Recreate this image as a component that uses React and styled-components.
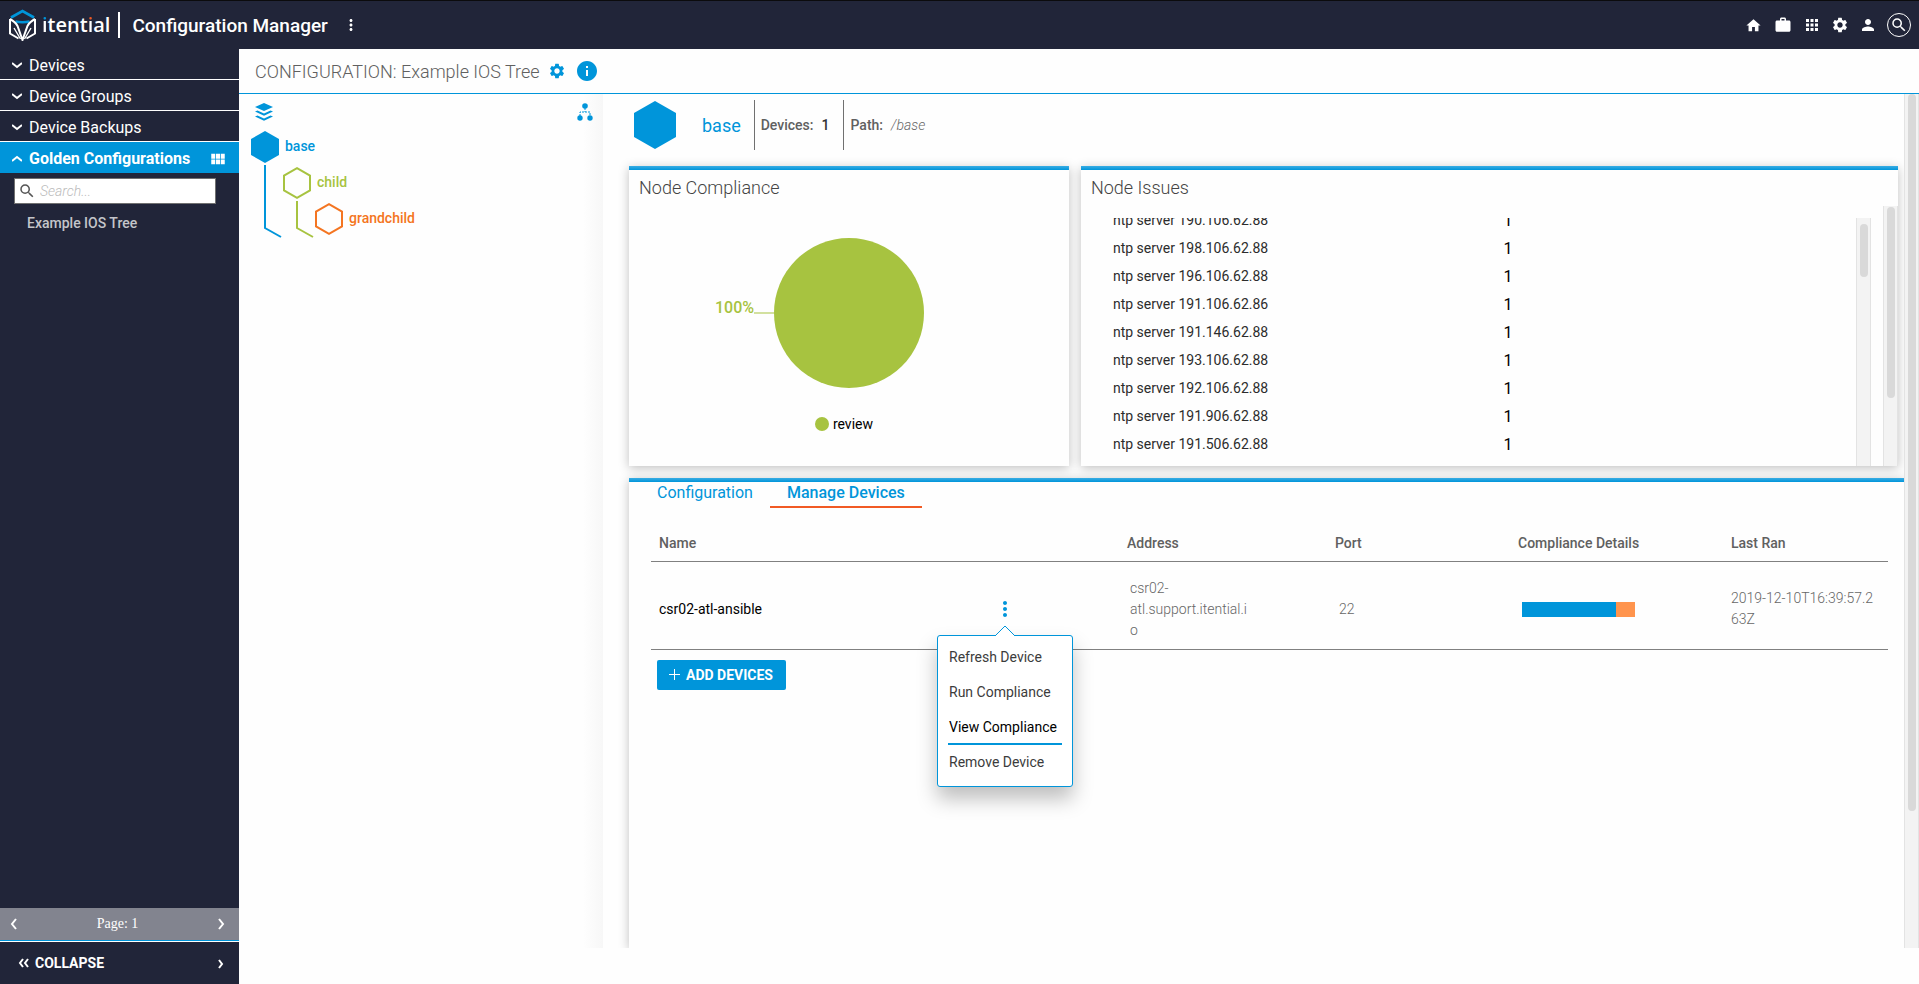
import React, { useLayoutEffect, useRef, useState } from "react";
import styled, { createGlobalStyle } from "styled-components";
import {
  MdHome,
  MdWork,
  MdApps,
  MdSettings,
  MdPerson,
  MdSearch,
  MdMoreVert,
  MdViewModule,
  MdInfo,
} from "react-icons/md";

const GlobalStyle = createGlobalStyle`
  * {
    box-sizing: border-box;
  }
  body {
    margin: 0;
    background: #fefefe;
    color: #606060;
    font-family: Roboto, "Liberation Sans", sans-serif;
    font-size: 14px;
  }
  button,
  input {
    font-family: inherit;
  }
`;

const blue = "#0095da";
const green = "#a7c340";
const orange = "#f47521";
const navy = "#212539";

const Shell = styled.div`
  display: flex;
  flex-direction: column;
  height: 100vh;
`;

/* header */
const Header = styled.header`
  display: flex;
  align-items: center;
  height: 49px;
  flex-shrink: 0;
  padding: 0 8px;
  color: #fff;
  background: ${navy};
  border-top: 1px solid #0b0b0d;
`;
const Brand = styled.a`
  display: flex;
  align-items: center;
  gap: 5px;
  padding-right: 8px;
  border-right: 2px solid #fff;
  height: 26px;
  color: #fff;
  text-decoration: none;
`;
const BrandName = styled.span`
  font: 600 20px/26px "Open Sans", sans-serif;
`;
const BrandLetter = styled.span`
  background: linear-gradient(${(props) => props.$dot} 10px, #fff 10px);
  background-clip: text;
  color: transparent;
`;
const AppTitle = styled.h1`
  margin: 0 14px 0 12px;
  font-size: 19px;
  font-weight: 500;
`;
const IconButton = styled.button`
  display: flex;
  align-items: center;
  justify-content: center;
  width: ${(props) => props.$size || 18}px;
  height: ${(props) => props.$size || 18}px;
  padding: 0;
  border: none;
  background: none;
  color: inherit;
  cursor: pointer;
`;
const HeaderTools = styled.nav`
  display: flex;
  align-items: center;
  gap: 10px;
  margin-left: auto;
`;
const SearchCircle = styled(IconButton)`
  border: 1px solid #fff;
  border-radius: 50%;
`;

/* sidebar */
const Body = styled.div`
  display: flex;
  flex: 1;
  min-height: 0;
`;
const Sidebar = styled.aside`
  display: flex;
  flex-direction: column;
  width: 239px;
  flex-shrink: 0;
  color: #fff;
  background: ${navy};
`;
const Section = styled.div`
  display: flex;
  align-items: center;
  height: 31px;
  padding: 2px 12px 0 0;
  background: ${(props) => (props.$open ? blue : "none")};
  border-bottom: ${(props) => (props.$open ? "none" : "1px solid #fff")};
`;
const SectionToggle = styled.button`
  display: flex;
  align-items: center;
  gap: 7px;
  flex: 1;
  padding: 0 0 0 12px;
  border: none;
  background: none;
  color: #fff;
  font-size: 16px;
  font-weight: ${(props) => (props.$open ? 700 : 400)};
  cursor: pointer;
`;
const SearchBox = styled.label`
  display: flex;
  align-items: center;
  gap: 4px;
  height: 26px;
  margin: 5px 23px 0 14px;
  padding: 0 4px 0 3px;
  border: 1px solid #707070;
  background: #fff;
  color: #555;
`;
const SearchInput = styled.input`
  flex: 1;
  min-width: 0;
  padding: 0;
  border: none;
  outline: none;
  font-size: 14px;
  &::placeholder {
    color: #bbb;
    font-style: italic;
    font-weight: 300;
  }
`;
const TreeList = styled.ul`
  flex: 1;
  margin: 0;
  padding: 10px 27px;
  list-style: none;
`;
const TreeLink = styled.a`
  color: #c4c5ca;
  font-weight: 500;
  line-height: 18px;
  text-decoration: none;
`;
const Pager = styled.div`
  display: flex;
  align-items: center;
  justify-content: space-between;
  height: 33px;
  padding: 0 12px 0 8px;
  background: #82848f;
  border-bottom: 1px solid ${blue};
  font-family: "Liberation Serif", serif;
`;
const CollapseBar = styled.div`
  display: flex;
  align-items: center;
  justify-content: space-between;
  height: 43px;
  padding: 0 12px 0 18px;
  border-top: 1px solid #fff;
`;
const CollapseButton = styled.button`
  display: flex;
  align-items: center;
  gap: 5px;
  padding: 0;
  border: none;
  background: none;
  color: #fff;
  font-size: 14px;
  font-weight: 700;
  cursor: pointer;
`;

/* main area */
const Main = styled.main`
  display: flex;
  flex-direction: column;
  flex: 1;
  min-width: 0;
  padding-bottom: 36px;
`;
const TitleBar = styled.div`
  display: flex;
  align-items: center;
  height: 45px;
  flex-shrink: 0;
  padding-left: 16px;
  color: ${blue};
  border-bottom: 1px solid ${blue};
`;
const PageTitle = styled.h2`
  margin: 0 8px 0 0;
  color: #606060;
  font-size: 18px;
  font-weight: 300;
`;
const InfoButton = styled(IconButton)`
  margin-left: 9px;
`;
const Panes = styled.div`
  display: flex;
  flex: 1;
  min-height: 0;
`;
const TreePane = styled.section`
  width: 364px;
  flex-shrink: 0;
  padding: 9px 9px 0 12px;
  background: linear-gradient(to left, #f7f7f7, rgba(255, 255, 255, 0) 20px);
`;
const TreeTools = styled.div`
  display: flex;
  justify-content: space-between;
  padding: 0 0 8px 4px;
  color: ${blue};
`;
const Node = styled.div`
  position: relative;
  display: flex;
  align-items: center;
  gap: 6px;
  height: 36px;
  padding-left: ${(props) => props.$depth * 32}px;
  color: ${(props) => props.$color};
  font-weight: 500;
`;
const NodeLabel = styled.span`
  padding-bottom: 2px;
`;
const Connector = styled.svg`
  position: absolute;
  top: 36px;
  left: ${(props) => props.$depth * 32 + 13}px;
`;
const DetailPane = styled.section`
  display: flex;
  flex-direction: column;
  flex: 1;
  min-width: 0;
  padding-left: 26px;
  overflow: hidden;
`;
const NodeHeader = styled.div`
  display: flex;
  align-items: center;
  height: 72px;
  flex-shrink: 0;
  padding: 6px 5px 16px;
  color: ${blue};
`;
const NodeName = styled.h3`
  margin: 0 13px 0 26px;
  font-size: 18px;
  font-weight: 400;
`;
const Fact = styled.div`
  display: flex;
  align-items: center;
  gap: 8px;
  height: 50px;
  padding: 0 14px 0 6px;
  border-left: 1px solid #707070;
  color: #606060;
  font-weight: 500;
`;
const FactValue = styled.span`
  color: #333;
`;
const PathValue = styled.em`
  color: #666;
  font-weight: 300;
`;
const Cards = styled.div`
  display: grid;
  grid-template-columns: 35fr 65fr;
  gap: 12px;
  margin-right: 6px;
`;
const Card = styled.section`
  display: flex;
  flex-direction: column;
  height: 300px;
  padding-top: 4px;
  background: linear-gradient(#3aace3, ${blue}) top / 100% 4px no-repeat #fefefe;
  box-shadow: 0 2px 10px rgba(0, 0, 0, 0.25);
`;
const CardTitle = styled.h3`
  margin: 0;
  padding: 6px 10px;
  color: #444;
  font-size: 18px;
  font-weight: 300;
  line-height: 24px;
`;
const PieChart = styled.svg`
  display: block;
  margin: 31px auto 0;
`;
const Legend = styled.div`
  display: flex;
  align-items: center;
  justify-content: center;
  gap: 4px;
  margin-top: 27px;
  padding-right: 10px;
  color: #000;
`;
const LegendDot = styled.span`
  width: 14px;
  height: 14px;
  border-radius: 50%;
  background: ${green};
`;
const IssuesArea = styled.div`
  display: flex;
  flex: 1;
  min-height: 0;
`;
const IssuesScroller = styled.div`
  flex: 1;
  margin: 12px 0 0 32px;
  overflow: hidden;
`;
const IssuesTable = styled.table`
  width: 100%;
  border-collapse: collapse;
  table-layout: fixed;
  td {
    height: 28px;
    padding: 0;
    color: #2c2c2c;
  }
  td + td {
    padding-left: 19px;
    color: #000;
    font-size: 16px;
  }
`;
const Track = styled.div`
  width: 15px;
  flex-shrink: 0;
  margin: ${(props) => props.$margin || 0};
  padding: ${(props) => props.$top || 0}px 3px 0;
  background: #f3f3f3;
  border: solid #e3e3e3;
  border-width: 0 1px;
`;
const Thumb = styled.div`
  width: 8px;
  height: ${(props) => props.$length};
  border-radius: 4px;
  background: #d9d9d9;
`;
const Panel = styled(Card)`
  flex: 1;
  height: auto;
  margin-top: 12px;
`;
const Tabs = styled.div`
  display: flex;
  margin-left: 11px;
`;
const Tab = styled.button`
  padding: 1px 17px 3px;
  border: none;
  border-bottom: 2px solid ${(props) => (props.$active ? "#f15a24" : "transparent")};
  background: none;
  color: ${blue};
  font-size: 16px;
  font-weight: ${(props) => (props.$active ? 500 : 400)};
  line-height: 20px;
  cursor: pointer;
`;
const DevicesArea = styled.div`
  margin: 17px 16px 10px 22px;
`;
const DevicesTable = styled.table`
  width: 100%;
  border-collapse: collapse;
  table-layout: fixed;
  color: #666;
  font-weight: 300;
  line-height: 21px;
  tr {
    border-bottom: 1px solid #808080;
  }
  th {
    height: 36px;
    padding: 2px 8px 0;
    color: #606060;
    font-weight: 500;
    text-align: left;
  }
  td {
    height: 88px;
    padding: 8px 8px 0;
  }
`;
const Col = styled.col`
  width: ${(props) => props.$width};
`;
const DeviceName = styled.td`
  color: #000;
  font-weight: 400;
`;
const Address = styled.div`
  width: 122px;
  margin-left: 3px;
  overflow-wrap: anywhere;
`;
const Port = styled.td`
  && {
    padding-left: 12px;
  }
`;
const Timestamp = styled.td`
  word-break: break-all;
`;
const ComplianceBar = styled.div`
  width: 113px;
  height: 15px;
  margin-left: 4px;
  background: #ff944d;
`;
const CompliancePassed = styled.div`
  height: 100%;
  background: ${blue};
`;
const MenuAnchor = styled.div`
  position: relative;
  width: 24px;
  margin: 0 auto;
  color: ${blue};
`;
const Menu = styled.div`
  position: absolute;
  top: 38px;
  left: -56px;
  z-index: 2;
  width: 136px;
  padding: 4px 10px 6px;
  background: #fff;
  border: 1px solid ${blue};
  border-radius: 3px;
  box-shadow: 0 12px 20px rgba(0, 0, 0, 0.25);
`;
const MenuArrow = styled.svg`
  position: absolute;
  top: -11px;
  left: 57px;
`;
const MenuItem = styled.button`
  display: block;
  width: 100%;
  height: 35px;
  padding: 0 0 0 1px;
  border: none;
  border-bottom: 2px solid ${(props) => (props.$active ? blue : "transparent")};
  background: none;
  color: ${(props) => (props.$active ? "#000" : "#3c3c3c")};
  font-size: 14px;
  text-align: left;
  white-space: nowrap;
  cursor: pointer;
`;
const AddButton = styled.button`
  display: flex;
  align-items: center;
  align-self: flex-start;
  gap: 6px;
  height: 30px;
  margin-left: 28px;
  padding: 0 13px 0 12px;
  border: none;
  border-radius: 2px;
  background: ${blue};
  color: #fff;
  font-size: 14px;
  font-weight: 700;
  cursor: pointer;
`;

const Chevron = ({ points, width = 12, height = 12 }) => (
  <svg width={width} height={height} fill="none" stroke="currentColor" strokeWidth="2">
    <path d={points} />
  </svg>
);

const Logo = () => (
  <svg width="29" height="32" viewBox="0 0 29 32" fill="none">
    <path d="M3 8.5 L14.5 2 L26 8.5" stroke={blue} strokeWidth="2.6" />
    <path d="M7.5 12.5 Q14.5 14 21.5 12.5" stroke={blue} strokeWidth="2.4" />
    <path d="M2 10 V24.5 L10.5 29.5" stroke="#fff" strokeWidth="2" />
    <path d="M27 10 V24.5 L18.5 29.5" stroke="#fff" strokeWidth="2" />
    <path d="M2 10 Q7.5 13 9.5 17 L14.5 31 L19.5 17 Q21.5 13 27 10" stroke="#fff" strokeWidth="2" />
    <path d="M6 19 L12.5 30 M23 19 L16.5 30" stroke="#fff" strokeWidth="1.4" />
  </svg>
);

const Hexagon = ({ width, height, filled }) => (
  <svg width={width} height={height} viewBox="0 0 28 32">
    <path
      d={filled ? "M14 0 L28 8 V24 L14 32 L0 24 V8 Z" : "M14 1.2 L27 8.6 V23.4 L14 30.8 L1 23.4 V8.6 Z"}
      fill={filled ? "currentColor" : "none"}
      stroke={filled ? "none" : "currentColor"}
      strokeWidth="2"
    />
  </svg>
);

const LayersIcon = () => (
  <svg width="18" height="18" viewBox="0 0 18 18" fill="currentColor">
    <path d="M9 0 L18 4 L9 8 L0 4 Z" />
    <path d="M0 8.5 L2.5 7.5 L9 10.5 L15.5 7.5 L18 8.5 L9 12.7 Z" />
    <path d="M0 13.5 L2.5 12.5 L9 15.5 L15.5 12.5 L18 13.5 L9 17.7 Z" />
  </svg>
);

const HierarchyIcon = () => (
  <svg width="16" height="18" viewBox="0 0 16 18" fill="currentColor">
    <circle cx="8" cy="3" r="2.8" />
    <circle cx="3" cy="15" r="2.7" />
    <circle cx="13" cy="15" r="2.7" />
    <path d="M8 5 V9 M3 13 V9 H13 V13" fill="none" stroke="currentColor" strokeWidth="1" strokeDasharray="2 1" />
  </svg>
);

const sections = ["Devices", "Device Groups", "Device Backups"];

const nodes = [
  { name: "base", color: blue, drop: 63 },
  { name: "child", color: green, drop: 27 },
  { name: "grandchild", color: orange },
];

const issues = [
  "190.106.62.88",
  "198.106.62.88",
  "196.106.62.88",
  "191.106.62.86",
  "191.146.62.88",
  "193.106.62.88",
  "192.106.62.88",
  "191.906.62.88",
  "191.506.62.88",
  "191.106.62.11",
  "191.106.62.14",
];

const menuItems = ["Refresh Device", "Run Compliance", "View Compliance", "Remove Device"];

const device = {
  name: "csr02-atl-ansible",
  address: "csr02-atl.support.itential.io",
  port: 22,
  passed: 83,
  lastRan: "2019-12-10T16:39:57.263Z",
};

function TopBar() {
  return (
    <Header>
      <Brand href="#">
        <Logo />
        <BrandName>
          <BrandLetter $dot={blue}>i</BrandLetter>tent
          <BrandLetter $dot="#f15a24">i</BrandLetter>al
        </BrandName>
      </Brand>
      <AppTitle>Configuration Manager</AppTitle>
      <IconButton aria-label="Application menu">
        <MdMoreVert size={18} />
      </IconButton>
      <HeaderTools>
        <IconButton $size={20} aria-label="Home">
          <MdHome size={17} />
        </IconButton>
        <IconButton $size={20} aria-label="Jobs">
          <MdWork size={18} />
        </IconButton>
        <IconButton aria-label="Applications">
          <MdApps size={18} />
        </IconButton>
        <IconButton aria-label="Settings">
          <MdSettings size={18} />
        </IconButton>
        <IconButton aria-label="Profile">
          <MdPerson size={18} />
        </IconButton>
        <SearchCircle $size={24} aria-label="Search">
          <MdSearch size={18} />
        </SearchCircle>
      </HeaderTools>
    </Header>
  );
}

function SideNav() {
  const [search, setSearch] = useState("");

  return (
    <Sidebar>
      {sections.map((name) => (
        <Section key={name}>
          <SectionToggle>
            <Chevron width={10} points="M0 4 L5 8 L10 4" />
            {name}
          </SectionToggle>
        </Section>
      ))}
      <Section $open>
        <SectionToggle $open>
          <Chevron width={10} points="M0 8 L5 4 L10 8" />
          Golden Configurations
        </SectionToggle>
        <IconButton aria-label="Show all">
          <MdViewModule size={18} />
        </IconButton>
      </Section>
      <SearchBox>
        <MdSearch size={18} />
        <SearchInput
          aria-label="Search configurations"
          placeholder="Search..."
          value={search}
          onChange={(e) => setSearch(e.target.value)}
        />
      </SearchBox>
      <TreeList>
        <li>
          <TreeLink href="#">Example IOS Tree</TreeLink>
        </li>
      </TreeList>
      <Pager>
        <IconButton $size={12} aria-label="Previous page">
          <Chevron points="M8 1 L4 6 L8 11" />
        </IconButton>
        Page: 1
        <IconButton $size={12} aria-label="Next page">
          <Chevron points="M4 1 L8 6 L4 11" />
        </IconButton>
      </Pager>
      <CollapseBar>
        <CollapseButton>
          <Chevron points="M5 2 L2 6 L5 10 M10 2 L7 6 L10 10" />
          COLLAPSE
        </CollapseButton>
        <IconButton $size={12} aria-label="Expand">
          <Chevron points="M4 3 L7 7 L4 11" />
        </IconButton>
      </CollapseBar>
    </Sidebar>
  );
}

function ConfigTree() {
  return (
    <TreePane>
      <TreeTools>
        <IconButton aria-label="Layers">
          <LayersIcon />
        </IconButton>
        <IconButton aria-label="Tree view">
          <HierarchyIcon />
        </IconButton>
      </TreeTools>
      {nodes.map((node, depth) => (
        <Node key={node.name} $depth={depth} $color={node.color}>
          <Hexagon width={28} height={32} filled={depth === 0} />
          <NodeLabel>{node.name}</NodeLabel>
          {node.drop && (
            <Connector $depth={depth} width="18" height={node.drop + 10} fill="none" stroke="currentColor" strokeWidth="2">
              <path d={`M1 0 V${node.drop} L17 ${node.drop + 9}`} />
            </Connector>
          )}
        </Node>
      ))}
    </TreePane>
  );
}

function NodeCompliance() {
  return (
    <Card>
      <CardTitle>Node Compliance</CardTitle>
      <PieChart width="268" height="152" role="img" aria-label="100% review">
        <circle cx="134" cy="76" r="75" fill={green} />
        <path d="M39 76 H59" stroke={green} strokeWidth="1" />
        <text x="0" y="76" fill={green} fontSize="16" fontWeight="500">
          100%
        </text>
      </PieChart>
      <Legend>
        <LegendDot />
        review
      </Legend>
    </Card>
  );
}

function NodeIssues() {
  const scrollerRef = useRef(null);

  useLayoutEffect(() => {
    scrollerRef.current.scrollTop = 12;
  }, []);

  return (
    <Card>
      <CardTitle>Node Issues</CardTitle>
      <IssuesArea>
        <IssuesScroller ref={scrollerRef}>
          <IssuesTable>
            <tbody>
              {issues.map((ip) => (
                <tr key={ip}>
                  <td>ntp server {ip}</td>
                  <td>1</td>
                </tr>
              ))}
            </tbody>
          </IssuesTable>
        </IssuesScroller>
        <Track $margin="12px 12px 0 0" $top={6}>
          <Thumb $length="53px" />
        </Track>
        <Track $top={1}>
          <Thumb $length="191px" />
        </Track>
      </IssuesArea>
    </Card>
  );
}

function DeviceMenu() {
  const [open, setOpen] = useState(true);

  return (
    <MenuAnchor>
      <IconButton $size={24} aria-label="Device actions" onClick={() => setOpen(!open)}>
        <MdMoreVert size={24} />
      </IconButton>
      {open && (
        <Menu>
          <MenuArrow width="20" height="12">
            <path d="M0 11 L10 1 L20 11" fill="#fff" stroke={blue} />
            <path d="M1 11 H19" stroke="#fff" strokeWidth="2" />
          </MenuArrow>
          {menuItems.map((item) => (
            <MenuItem key={item} $active={item === "View Compliance"}>
              {item}
            </MenuItem>
          ))}
        </Menu>
      )}
    </MenuAnchor>
  );
}

function ManageDevices() {
  return (
    <Panel>
      <Tabs>
        <Tab>Configuration</Tab>
        <Tab $active>Manage Devices</Tab>
      </Tabs>
      <DevicesArea>
        <DevicesTable>
          <colgroup>
            <Col />
            <Col $width="228px" />
            <Col $width="208px" />
            <Col $width="183px" />
            <Col $width="213px" />
            <Col $width="165px" />
          </colgroup>
          <thead>
            <tr>
              <th>Name</th>
              <th aria-label="Actions" />
              <th>Address</th>
              <th>Port</th>
              <th>Compliance Details</th>
              <th>Last Ran</th>
            </tr>
          </thead>
          <tbody>
            <tr>
              <DeviceName>{device.name}</DeviceName>
              <td>
                <DeviceMenu />
              </td>
              <td>
                <Address>{device.address}</Address>
              </td>
              <Port>{device.port}</Port>
              <td>
                <ComplianceBar>
                  <CompliancePassed style={{ width: `${device.passed}%` }} />
                </ComplianceBar>
              </td>
              <Timestamp>{device.lastRan}</Timestamp>
            </tr>
          </tbody>
        </DevicesTable>
      </DevicesArea>
      <AddButton>
        <svg width="11" height="11" stroke="currentColor" strokeWidth="1">
          <path d="M5.5 0 V11 M0 5.5 H11" />
        </svg>
        ADD DEVICES
      </AddButton>
    </Panel>
  );
}

function App() {
  return (
    <>
      <GlobalStyle />
      <Shell>
        <TopBar />
        <Body>
          <SideNav />
          <Main>
            <TitleBar>
              <PageTitle>CONFIGURATION: Example IOS Tree</PageTitle>
              <IconButton aria-label="Edit configuration">
                <MdSettings size={18} />
              </IconButton>
              <InfoButton $size={24} aria-label="Information">
                <MdInfo size={24} />
              </InfoButton>
            </TitleBar>
            <Panes>
              <ConfigTree />
              <DetailPane>
                <NodeHeader>
                  <Hexagon width={42} height={48} filled />
                  <NodeName>base</NodeName>
                  <Fact>
                    Devices: <FactValue>1</FactValue>
                  </Fact>
                  <Fact>
                    Path: <PathValue>/base</PathValue>
                  </Fact>
                </NodeHeader>
                <Cards>
                  <NodeCompliance />
                  <NodeIssues />
                </Cards>
                <ManageDevices />
              </DetailPane>
              <Track>
                <Thumb $length="84%" />
              </Track>
            </Panes>
          </Main>
        </Body>
      </Shell>
    </>
  );
}

export default App;
